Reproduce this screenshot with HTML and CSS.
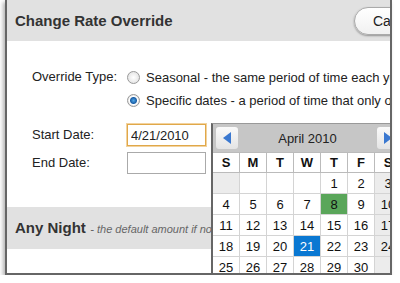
FILE: index.html
```html
<!DOCTYPE html>
<html>
<head>
    <link rel="stylesheet" href="styles.css">
</head>
<body>

    <div class="dialog">
        <div class="title-bar">
            <h2>Change Rate Override</h2>
            <button class="cancel">Cancel</button>
        </div>

        <div class="form">
            <div class="row">
                <span class="label">Override Type:</span>
                <div class="options">
                    <label class="option"><span class="radio"></span>Seasonal - the same period of time each year</label>
                    <label class="option"><span class="radio checked"></span>Specific dates - a period of time that only occurs once</label>
                </div>
            </div>
            <div class="row date-row">
                <span class="label">Start Date:</span>
                <input type="text" class="date focused" value="4/21/2010">
            </div>
            <div class="row date-row">
                <span class="label">End Date:</span>
                <input type="text" class="date">
            </div>
        </div>

        <div class="section">
            <strong>Any Night</strong> <em>- the default amount if no other rate applies</em>
        </div>

        <div class="calendar">
            <div class="cal-head">
                <span class="nav"><svg width="8" height="12" viewBox="0 0 8 12"><path d="M8 0 L0 6 L8 12 Z" fill="#3a78d0"/></svg></span>
                <span class="month">April 2010</span>
                <span class="nav"><svg width="8" height="12" viewBox="0 0 8 12"><path d="M0 0 L8 6 L0 12 Z" fill="#3a78d0"/></svg></span>
            </div>
            <div class="days">
                <span class="dow">S</span><span class="dow">M</span><span class="dow">T</span><span class="dow">W</span><span class="dow">T</span><span class="dow">F</span><span class="dow">S</span>
                <span class="off"></span><span></span><span></span><span></span><span>1</span><span>2</span><span class="off">3</span>
                <span>4</span><span>5</span><span>6</span><span>7</span><span class="today">8</span><span>9</span><span class="off">10</span>
                <span>11</span><span>12</span><span>13</span><span>14</span><span>15</span><span>16</span><span class="off">17</span>
                <span>18</span><span>19</span><span>20</span><span class="selected">21</span><span>22</span><span>23</span><span class="off">24</span>
                <span>25</span><span>26</span><span>27</span><span>28</span><span>29</span><span>30</span><span class="off"></span>
            </div>
        </div>
    </div>

</body>
</html>
```

FILE: styles.css
```css
body {
    margin: 0;
    background-color: #fff;
    font-family: "Liberation Sans", Arial, sans-serif;
    color: #222;
}
.dialog {
    position: relative;
    width: 383px;
    height: 273px;
    margin-left: 5px;
    border: 2px solid #666;
    border-top: none;
    background-color: #fff;
    overflow: hidden;
    box-shadow: -2px 2px 4px rgba(0, 0, 0, 0.3);
}
.title-bar {
    display: flex;
    align-items: center;
    height: 41px;
    background-color: #e1e1e1;
    padding-left: 8px;
}
.title-bar h2 {
    margin: 0;
    font-size: 15px;
    color: #333;
}
.cancel {
    flex-shrink: 0;
    margin-left: auto;
    margin-right: -40px;
    width: 76px;
    height: 28px;
    padding: 0 0 0 18px;
    text-align: left;
    border: 1px solid #aaa;
    border-radius: 14px;
    background: linear-gradient(#fff, #f1f1f1);
    box-shadow: 0 1px 2px rgba(0, 0, 0, 0.35);
    font-family: "Liberation Sans", Arial, sans-serif;
    font-size: 14px;
    color: #222;
}
.form {
    padding: 28px 0 0 25px;
    font-size: 13px;
}
.row {
    display: flex;
}
.label {
    width: 95px;
    flex-shrink: 0;
}
.options {
    display: flex;
    flex-direction: column;
    gap: 7px;
    white-space: nowrap;
}
.option {
    display: flex;
    align-items: center;
    height: 16px;
}
.row .label {
    line-height: 16px;
}
.radio {
    width: 11px;
    height: 11px;
    border: 1px solid #999;
    border-radius: 50%;
    background: radial-gradient(#fff, #ddd);
    margin-right: 6px;
}
.radio.checked {
    background: radial-gradient(circle, #4fa7e8 0, #1c5fa6 3px, #fff 4px, #ddd 6px);
}
.date-row {
    align-items: center;
}
.date-row:nth-child(2) {
    margin-top: 16px;
}
.date-row:nth-child(3) {
    margin-top: 6px;
}
.date {
    box-sizing: border-box;
    width: 79px;
    height: 22px;
    margin: 0;
    padding: 0 3px;
    border: 1px solid #aaa;
    font-family: "Liberation Sans", Arial, sans-serif;
    font-size: 13px;
    color: #222;
}
.date.focused {
    border-color: #e0a84a;
    box-shadow: 0 0 0 1px #f3d39e;
}
.section {
    margin-top: 33px;
    height: 42px;
    line-height: 42px;
    background-color: #e1e1e1;
    padding-left: 8px;
    white-space: nowrap;
}
.section strong {
    font-size: 15px;
    color: #333;
}
.section em {
    font-size: 11px;
    color: #666;
}
.calendar {
    position: absolute;
    left: 204px;
    top: 123px;
    width: 189px;
    border-left: 2px solid #666;
    border-top: 1px solid #999;
    background-color: #fff;
    font-size: 13px;
}
.cal-head {
    display: flex;
    align-items: center;
    justify-content: space-between;
    height: 28px;
    padding: 0 3px;
    background-color: #c6c6c6;
}
.nav {
    display: flex;
    align-items: center;
    justify-content: center;
    width: 22px;
    height: 22px;
    border-radius: 3px;
    background: linear-gradient(#fafafa, #e4e4e4);
}
.month {
    font-size: 13px;
    color: #222;
}
.days {
    display: grid;
    grid-template-columns: repeat(7, 27px);
    grid-auto-rows: 21px;
}
.days span {
    display: flex;
    align-items: center;
    justify-content: center;
    border-right: 1px solid #d4d4d4;
    border-bottom: 1px solid #d4d4d4;
    color: #111;
}
.days .dow {
    font-weight: bold;
    border-top: 1px solid #aaa;
    border-color: #bbb;
}
.days .off {
    background-color: #ececec;
}
.days .today {
    background-color: #5aa65a;
}
.days .selected {
    background-color: #0a78d2;
    color: #fff;
}
```
